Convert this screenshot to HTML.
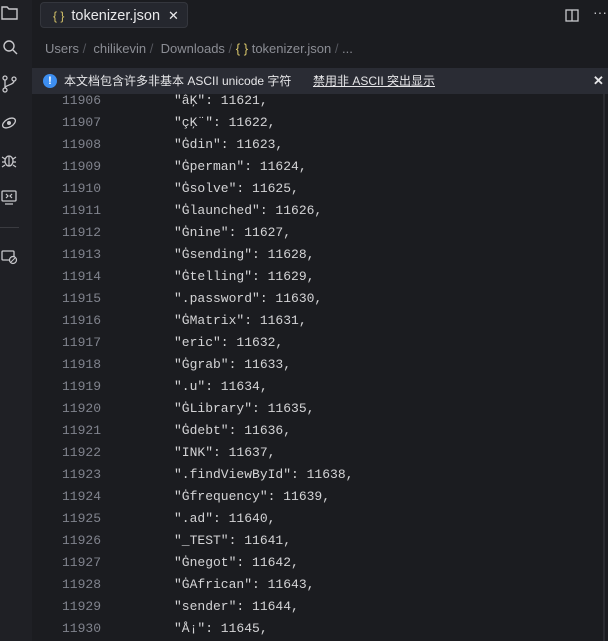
<!DOCTYPE html>
<html><head><meta charset="utf-8"><style>
body{margin:0;width:608px;height:641px;background:#1b1c20;overflow:hidden;font-family:"Liberation Sans","Noto Sans CJK SC",sans-serif;position:relative}
.act{position:absolute;left:0;top:0;width:32px;height:641px;background:#1f2025}
.ic{position:absolute;left:0;width:20px}
.tab{position:absolute;left:40px;top:2px;width:148px;height:26px;background:#25272e;border:1px solid #34363d;border-radius:4px;color:#e8e8ea;font-size:14.5px;line-height:26px;box-sizing:border-box}
.bc{position:absolute;left:45px;top:40px;color:#8b8d94;font-size:13px;line-height:18px;white-space:pre}
.banner{position:absolute;left:32px;top:68px;width:576px;height:26px;background:#2a2c34;color:#e6e6e8;font-size:12px;line-height:26px}
.code{position:absolute;left:32px;top:88px;font-family:"Liberation Mono",monospace;font-size:13px}
.ln{position:absolute;left:30px;color:#80838d;white-space:pre}
.tx{position:absolute;left:142px;color:#d4d4d6;white-space:pre}
.sb{position:absolute;left:603px;top:94px;width:2px;height:547px;background:#2a2b30}
</style></head><body>
<div class="act">
<svg class="ic" style="top:4px;left:0" width="20" height="18" viewBox="0 0 20 18"><path d="M2 3h5l2 2h8v10H2z" fill="none" stroke="#c8c8cc" stroke-width="1.4"/></svg>
<svg class="ic" style="top:38px" width="20" height="18"><circle cx="9" cy="8" r="5" fill="none" stroke="#c8c8cc" stroke-width="1.4"/><path d="M13 12l4 4" stroke="#c8c8cc" stroke-width="1.4"/></svg>
<svg class="ic" style="top:74px" width="20" height="20"><circle cx="5" cy="4" r="2" fill="none" stroke="#c8c8cc" stroke-width="1.3"/><circle cx="5" cy="16" r="2" fill="none" stroke="#c8c8cc" stroke-width="1.3"/><circle cx="14" cy="5" r="2" fill="none" stroke="#c8c8cc" stroke-width="1.3"/><path d="M5 6v8M14 7c0 4-9 4-9 7" fill="none" stroke="#c8c8cc" stroke-width="1.3"/></svg>
<svg class="ic" style="top:112px" width="20" height="20"><ellipse cx="9" cy="11" rx="7" ry="4" fill="none" stroke="#c8c8cc" stroke-width="1.3" transform="rotate(-30 9 11)"/><circle cx="9" cy="11" r="2" fill="#c8c8cc"/></svg>
<svg class="ic" style="top:150px" width="20" height="20"><ellipse cx="9" cy="11" rx="4" ry="5" fill="none" stroke="#c8c8cc" stroke-width="1.3"/><path d="M2 7l3 2M16 7l-3 2M2 12h3M13 12h3M2 17l3-2M16 17l-3-2M9 6v10" stroke="#c8c8cc" stroke-width="1.2"/></svg>
<svg class="ic" style="top:188px" width="20" height="20"><rect x="2" y="3" width="14" height="10" rx="1" fill="none" stroke="#c8c8cc" stroke-width="1.3"/><path d="M6 6l2 2-2 2M12 6l-2 2 2 2M5 16h8" fill="none" stroke="#c8c8cc" stroke-width="1.2"/></svg>
<div style="position:absolute;left:0;top:227px;width:19px;height:1px;background:#3a3b40"></div>
<svg class="ic" style="top:248px" width="20" height="20"><rect x="2" y="3" width="12" height="9" rx="1" fill="none" stroke="#c8c8cc" stroke-width="1.3"/><circle cx="13" cy="12" r="3.5" fill="#1f2025" stroke="#c8c8cc" stroke-width="1.2"/><path d="M11 14l4-4" stroke="#c8c8cc" stroke-width="1"/></svg>
</div>
<div class="tab"><span style="color:#d7c56a;margin-left:12px;font-size:12px">{ }</span><span style="margin-left:7px">tokenizer.json</span><span style="margin-left:8px;font-size:13px">✕</span></div>
<svg style="position:absolute;left:565px;top:9px" width="14" height="13"><rect x="1" y="1" width="12" height="11" fill="none" stroke="#c8c8cc" stroke-width="1.3"/><path d="M7 1v11" stroke="#c8c8cc" stroke-width="1.3"/></svg>
<div style="position:absolute;left:593px;top:4px;color:#c8c8cc;font-size:14px">···</div>
<div class="bc">Users <span style="color:#55575e">/</span>  chilikevin <span style="color:#55575e">/</span>  Downloads <span style="color:#55575e">/</span> <span style="color:#d7c56a">{ }</span> tokenizer.json <span style="color:#55575e">/</span> ...</div>
<div class="banner"><span style="position:absolute;left:11px;top:6px;width:14px;height:14px;border-radius:50%;background:#3d8ef0;color:#fff;font-size:11px;line-height:14px;text-align:center;font-weight:bold">!</span><span style="position:absolute;left:32px">本文档包含许多非基本 ASCII unicode 字符</span><span style="position:absolute;left:281px;text-decoration:underline">禁用非 ASCII 突出显示</span><span style="position:absolute;left:561px;font-weight:bold;font-size:13px">✕</span></div>
<div class="sb"></div>
<div class="code">
<div class="ln" style="top:2px;line-height:22px">11906
11907
11908
11909
11910
11911
11912
11913
11914
11915
11916
11917
11918
11919
11920
11921
11922
11923
11924
11925
11926
11927
11928
11929
11930</div>
<div class="tx" style="top:2px;line-height:22px">"âĶ": 11621,
"çĶ¨": 11622,
"Ġdin": 11623,
"Ġperman": 11624,
"Ġsolve": 11625,
"Ġlaunched": 11626,
"Ġnine": 11627,
"Ġsending": 11628,
"Ġtelling": 11629,
".password": 11630,
"ĠMatrix": 11631,
"eric": 11632,
"Ġgrab": 11633,
".u": 11634,
"ĠLibrary": 11635,
"Ġdebt": 11636,
"INK": 11637,
".findViewById": 11638,
"Ġfrequency": 11639,
".ad": 11640,
"_TEST": 11641,
"Ġnegot": 11642,
"ĠAfrican": 11643,
"sender": 11644,
"Å¡": 11645,</div>
</div>
</body></html>
